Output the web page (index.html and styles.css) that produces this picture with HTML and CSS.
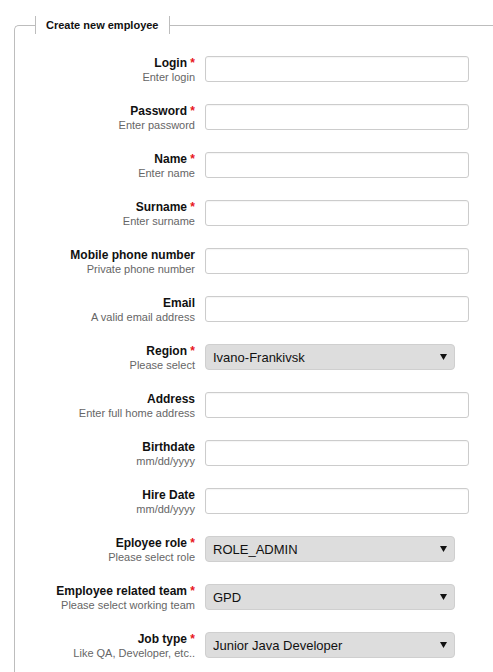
FILE: index.html
```html
<!DOCTYPE html>
<html lang="en">
<head>
<meta charset="utf-8">
<title>Create new employee</title>
<link rel="stylesheet" href="styles.css">
</head>
<body>
<form class="employee-form">
  <fieldset class="panel">
    <legend class="panel-title">Create new employee</legend>

    <div class="row">
      <label class="label" for="login"><span class="name">Login <span class="req">*</span></span><span class="hint">Enter login</span></label>
      <input class="input" id="login" type="text">
    </div>
    <div class="row">
      <label class="label" for="password"><span class="name">Password <span class="req">*</span></span><span class="hint">Enter password</span></label>
      <input class="input" id="password" type="text">
    </div>
    <div class="row">
      <label class="label" for="name"><span class="name">Name <span class="req">*</span></span><span class="hint">Enter name</span></label>
      <input class="input" id="name" type="text">
    </div>
    <div class="row">
      <label class="label" for="surname"><span class="name">Surname <span class="req">*</span></span><span class="hint">Enter surname</span></label>
      <input class="input" id="surname" type="text">
    </div>
    <div class="row">
      <label class="label" for="phone"><span class="name">Mobile phone number</span><span class="hint">Private phone number</span></label>
      <input class="input" id="phone" type="text">
    </div>
    <div class="row">
      <label class="label" for="email"><span class="name">Email</span><span class="hint">A valid email address</span></label>
      <input class="input" id="email" type="text">
    </div>
    <div class="row">
      <label class="label" for="region"><span class="name">Region <span class="req">*</span></span><span class="hint">Please select</span></label>
      <div class="select">
        <select id="region"><option>Ivano-Frankivsk</option></select>
        <svg class="arrow" width="7" height="6" viewBox="0 0 7 6"><path d="M0 0H7L3.5 6Z" fill="#111"/></svg>
      </div>
    </div>
    <div class="row">
      <label class="label" for="address"><span class="name">Address</span><span class="hint">Enter full home address</span></label>
      <input class="input" id="address" type="text">
    </div>
    <div class="row">
      <label class="label" for="birth"><span class="name">Birthdate</span><span class="hint">mm/dd/yyyy</span></label>
      <input class="input" id="birth" type="text">
    </div>
    <div class="row">
      <label class="label" for="hire"><span class="name">Hire Date</span><span class="hint">mm/dd/yyyy</span></label>
      <input class="input" id="hire" type="text">
    </div>
    <div class="row">
      <label class="label" for="role"><span class="name">Eployee role <span class="req">*</span></span><span class="hint">Please select role</span></label>
      <div class="select">
        <select id="role"><option>ROLE_ADMIN</option></select>
        <svg class="arrow" width="7" height="6" viewBox="0 0 7 6"><path d="M0 0H7L3.5 6Z" fill="#111"/></svg>
      </div>
    </div>
    <div class="row">
      <label class="label" for="team"><span class="name">Employee related team <span class="req">*</span></span><span class="hint">Please select working team</span></label>
      <div class="select">
        <select id="team"><option>GPD</option></select>
        <svg class="arrow" width="7" height="6" viewBox="0 0 7 6"><path d="M0 0H7L3.5 6Z" fill="#111"/></svg>
      </div>
    </div>
    <div class="row">
      <label class="label" for="job"><span class="name">Job type <span class="req">*</span></span><span class="hint">Like QA, Developer, etc..</span></label>
      <div class="select">
        <select id="job"><option>Junior Java Developer</option></select>
        <svg class="arrow" width="7" height="6" viewBox="0 0 7 6"><path d="M0 0H7L3.5 6Z" fill="#111"/></svg>
      </div>
    </div>
  </fieldset>
</form>
</body>
</html>
```
FILE: styles.css
```css
html, body {
  margin: 0;
  padding: 0;
  height: 100%;
  overflow: hidden;
  background: #fff;
}

body {
  font-family: "Liberation Sans", Arial, sans-serif;
  color: #111;
}

.employee-form {
  margin: 0;
  padding: 16px 0 0 14px;
}

.panel {
  margin: 0 -40px 0 0;
  padding: 22px 20px 20px 20px;
  border: 1px solid #bdbdbd;
  border-top-left-radius: 5px;
  border-right: none;
  border-bottom: none;
  display: flex;
  flex-direction: column;
  gap: 20px;
  min-width: 0;
}

.panel-title {
  padding: 0 10px;
  margin: 0;
  border-left: 1px solid #bdbdbd;
  border-right: 1px solid #bdbdbd;
  font-size: 11px;
  font-weight: bold;
  line-height: 18px;
  color: #111;
}

.row {
  display: flex;
  align-items: flex-start;
  gap: 10px;
}

.label {
  width: 160px;
  flex: none;
  display: flex;
  flex-direction: column;
  align-items: flex-end;
  text-align: right;
  font-size: 11px;
  line-height: 14px;
}

.name {
  font-weight: bold;
  font-size: 12px;
  color: #111;
}

.req {
  color: #e8141b;
}

.hint {
  color: #666;
}

.input {
  box-sizing: border-box;
  width: 264px;
  height: 26px;
  margin: 0;
  padding: 2px 6px;
  border: 1px solid #cccccc;
  border-radius: 3px;
  background: #fff;
  box-shadow: inset 0 1px 1px rgba(0, 0, 0, 0.04);
  font: 13px "Liberation Sans", Arial, sans-serif;
}

.select {
  position: relative;
  width: 250px;
  height: 26px;
  flex: none;
}

.select select {
  appearance: none;
  -webkit-appearance: none;
  box-sizing: border-box;
  width: 100%;
  height: 100%;
  margin: 0;
  padding: 0 24px 0 7px;
  border: 1px solid #cfcfcf;
  border-radius: 4px;
  background: #dddddd;
  color: #111;
  font: 13px "Liberation Sans", Arial, sans-serif;
}

.arrow {
  position: absolute;
  right: 8px;
  top: 10px;
  pointer-events: none;
}
```
